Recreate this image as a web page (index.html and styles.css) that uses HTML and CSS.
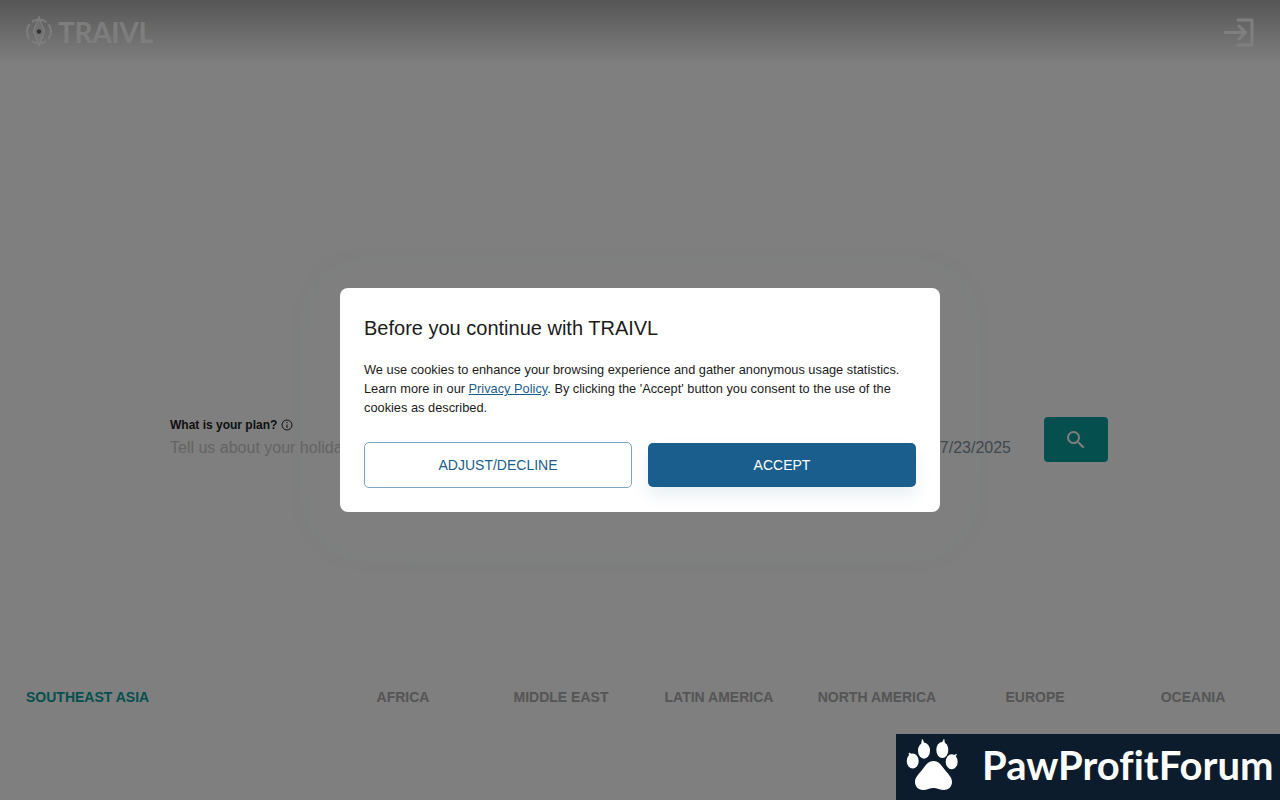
FILE: index.html
```html
<!DOCTYPE html>
<html lang="en">
<head>
<meta charset="UTF-8">
<meta name="viewport" content="width=device-width, initial-scale=1.0">
<title>TRAIVL</title>
<link rel="stylesheet" href="styles.css">
</head>
<body>
<div id="page">
  <div id="topbar">
    <a class="brand" href="#">
      <svg class="brand-mark" viewBox="0 0 32 32" width="32" height="32" fill="none" stroke="#fff">
        <circle cx="16" cy="15.500" r="12" stroke-width="2" stroke-dasharray="15.800 3" stroke-dashoffset="7.900"/>
        <path d="M16 1 L21.500 15.500 L16 30 L10.500 15.500 Z" fill="rgba(255,255,255,.45)" stroke-width="1.400"/>
        <circle cx="16" cy="15.500" r="2.200" fill="#555" stroke="none"/>
      </svg>
      <span class="brand-name">TRAIVL</span>
    </a>
    <a class="login" href="#">
      <svg viewBox="0 0 32 32" width="32" height="32" fill="none" stroke="#fff" stroke-width="3" stroke-linecap="round" stroke-linejoin="round">
        <path d="M15 4 H29 V29 H15"/>
        <path d="M2 16.500 H22 M16 10 L22.500 16.500 L16 23"/>
      </svg>
    </a>
  </div>

  <div id="hero">
    <div class="glow"></div>
    <div class="search-row">
      <div class="plan">
        <label class="plan-label">What is your plan?
          <svg class="info" viewBox="0 0 12 12" width="12" height="12" fill="none" stroke="#222">
            <circle cx="6" cy="6" r="5"/>
            <path d="M6 5.500 V9 M6 3 V4.200"/>
          </svg>
        </label>
        <input class="plan-input" type="text" placeholder="Tell us about your holiday">
      </div>
      <div class="plan-date">7/23/2025</div>
      <button class="search-btn">
        <svg viewBox="0 0 24 24" width="24" height="24" fill="#fff"><path d="M15.500 14h-.79l-.28-.27A6.470 6.470 0 0 0 16 9.500 6.500 6.500 0 1 0 9.500 16c1.610 0 3.090-.59 4.230-1.570l.27.28v.79l5 4.990L20.490 19l-4.990-5zm-6 0C7.010 14 5 11.990 5 9.500S7.010 5 9.500 5 14 7.010 14 9.500 11.990 14 9.500 14z"/></svg>
      </button>
    </div>
  </div>

  <div id="regions">
    <a class="region active" href="#">SOUTHEAST ASIA</a>
    <a class="region" href="#">AFRICA</a>
    <a class="region" href="#">MIDDLE EAST</a>
    <a class="region" href="#">LATIN AMERICA</a>
    <a class="region" href="#">NORTH AMERICA</a>
    <a class="region" href="#">EUROPE</a>
    <a class="region" href="#">OCEANIA</a>
  </div>
</div>

<!-- Cookie dialog -->
<div id="backdrop">
  <div class="dialog">
    <h2 class="dialog-title">Before you continue with TRAIVL</h2>
    <p class="dialog-text">We use cookies to enhance your browsing experience and gather anonymous usage statistics. Learn more in our <a href="#">Privacy Policy</a>. By clicking the 'Accept' button you consent to the use of the cookies as described.</p>
    <div class="dialog-actions">
      <button class="btn btn-outline">ADJUST/DECLINE</button>
      <button class="btn btn-solid">ACCEPT</button>
    </div>
  </div>
</div>

<!-- Forum banner -->
<div id="banner">
  <svg class="paw" viewBox="0 0 56 56" width="56" height="56" fill="#fff">
    <path d="M27.500 24 C33 24 36 29 39 33 C42 37 46 40 46 45 C46 50 42 53 38 53 C34 53 31 51 27.500 51 C24 51 21 53 17 53 C13 53 9 50 9 45 C9 40 13 37 16 33 C19 29 22 24 27.500 24 Z"/>
    <ellipse cx="6.700" cy="24" rx="6" ry="7.500"/>
    <ellipse cx="18" cy="13.700" rx="6" ry="8"/>
    <ellipse cx="36.300" cy="13" rx="6" ry="8"/>
    <ellipse cx="45.700" cy="24.700" rx="6" ry="7.500"/>
    <path d="M3 16 L5.500 17 L3.500 19 Z M16.300 2.300 L18 6 L15.500 6.500 Z M38 2.300 L38.500 6 L36 6 Z M50.700 17.300 L49 20 L47.500 18.500 Z" stroke="#fff" stroke-width=".6"/>
  </svg>
  <span class="banner-name">PawProfitForum</span>
</div>
</body>
</html>
```

FILE: styles.css
```css
/* Page */
html, body {
  margin: 0;
  padding: 0;
  height: 100%;
}

body {
  background-color: #fff;
  font-family: "Liberation Sans", Arial, sans-serif;
  overflow: hidden;
}

#page {
  height: 800px;
  display: flex;
  flex-direction: column;
}

/* Top bar */
#topbar {
  height: 64px;
  padding: 0 24px;
  display: flex;
  justify-content: space-between;
  align-items: center;
  background: linear-gradient(to bottom, rgba(0,0,0,.32), rgba(0,0,0,0));
}

.brand {
  display: flex;
  align-items: center;
  gap: 3px;
  color: #fff;
  text-decoration: none;
  opacity: .9;
}

.brand-mark {
  display: block;
  margin-left: -1px;
}

.brand-name {
  font-family: Lato, sans-serif;
  font-size: 28px;
  font-weight: 700;
  letter-spacing: -.3px;
}

.login {
  display: flex;
  margin-right: 1px;
}

/* Search */
#hero {
  position: relative;
  height: 623px;
  padding-right: 2px;
  display: flex;
  align-items: flex-start;
  justify-content: center;
}

.glow {
  position: absolute;
  left: 293px;
  top: 186px;
  width: 695px;
  height: 320px;
  border-radius: 70px;
  box-shadow: inset 0 0 40px rgba(0,128,128,.03), inset 0 0 2px rgba(0,0,0,.03);
}

.search-row {
  position: relative;
  margin-top: 353px;
  width: 938px;
  height: 45px;
  display: flex;
  align-items: flex-start;
}

.plan {
  flex: 1;
  min-width: 0;
}

.plan-label {
  display: flex;
  align-items: center;
  gap: 4px;
  height: 16px;
  margin-bottom: 3px;
  font-size: 12px;
  font-weight: 700;
  color: #222;
}

.plan-input {
  display: block;
  width: 100%;
  height: 24px;
  padding: 0;
  border: none;
  outline: none;
  background: none;
  font: 16px "Liberation Sans", Arial, sans-serif;
}

.plan-input::placeholder {
  color: #c8c8c8;
  opacity: 1;
}

.plan-date {
  margin: 21px 33px 0 0;
  font-size: 16px;
  line-height: 20px;
  color: #8090a0;
}

.search-btn {
  width: 64px;
  height: 45px;
  padding: 0;
  border: none;
  border-radius: 4px;
  background-color: #0a9e9e;
  display: flex;
  align-items: center;
  justify-content: center;
}

/* Regions */
#regions {
  display: flex;
  padding-right: 8px;
}

.region {
  width: 158px;
  text-align: center;
  font-size: 14px;
  line-height: 20px;
  font-weight: 700;
  color: #aaa;
  text-decoration: none;
}

.region.active {
  flex: 1;
  padding-left: 26px;
  text-align: left;
  color: #0a9e9e;
}

/* Cookie dialog */
#backdrop {
  position: fixed;
  left: 0;
  top: 0;
  width: 100%;
  height: 100%;
  background-color: rgba(0,0,0,.5);
  display: flex;
  align-items: center;
  justify-content: center;
}

.dialog {
  box-sizing: border-box;
  width: 600px;
  height: 224px;
  padding: 24px;
  background-color: #fff;
  border-radius: 8px;
  color: #1c1c1c;
}

.dialog-title {
  margin: 0 0 16px;
  font-size: 20px;
  line-height: 32px;
  font-weight: 400;
}

.dialog-text {
  margin: 0 0 25px;
  font-size: 12.8px;
  line-height: 19px;
}

.dialog-text a {
  color: #1a5e8e;
}

.dialog-actions {
  display: grid;
  grid-template-columns: 1fr 1fr;
  align-items: center;
  gap: 16px;
}

.btn {
  font-family: "Liberation Sans", Arial, sans-serif;
  font-size: 14px;
  border-radius: 5px;
  padding: 0;
}

.btn-outline {
  height: 46px;
  background-color: #fff;
  border: 1px solid #7ba6c6;
  color: #1a5e8e;
}

.btn-solid {
  height: 44px;
  background-color: #1a5e8e;
  border: none;
  color: #fff;
  box-shadow: 0 8px 16px rgba(26,94,142,.1);
}

/* Forum banner */
#banner {
  position: fixed;
  right: 0;
  bottom: 0;
  box-sizing: border-box;
  width: 384px;
  height: 66px;
  padding-left: 10px;
  display: flex;
  align-items: center;
  background-color: #0c1c2c;
}

.paw {
  flex: none;
  margin-top: -4px;
}

.banner-name {
  margin: -4px 0 0 20px;
  font-family: Lato, sans-serif;
  font-size: 40px;
  font-weight: 700;
  font-variant-ligatures: none;
  color: #fff;
  white-space: nowrap;
}
```
